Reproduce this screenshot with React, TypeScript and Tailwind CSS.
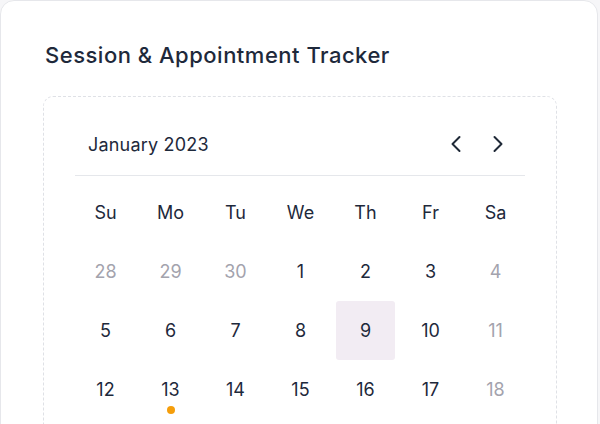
const font = { fontFamily: "Inter, 'Noto Sans', sans-serif" };

type Day = { n: number; muted?: boolean; selected?: boolean; dot?: boolean };

const weekDays = ["Su", "Mo", "Tu", "We", "Th", "Fr", "Sa"];

const rows: Day[][] = [
  [
    { n: 28, muted: true },
    { n: 29, muted: true },
    { n: 30, muted: true },
    { n: 1 },
    { n: 2 },
    { n: 3 },
    { n: 4, muted: true },
  ],
  [
    { n: 5 },
    { n: 6 },
    { n: 7 },
    { n: 8 },
    { n: 9, selected: true },
    { n: 10 },
    { n: 11, muted: true },
  ],
  [
    { n: 12 },
    { n: 13, dot: true },
    { n: 14 },
    { n: 15 },
    { n: 16 },
    { n: 17 },
    { n: 18, muted: true },
  ],
];

function Chevron({ dir }: { dir: "left" | "right" }) {
  return (
    <svg width="14" height="18" viewBox="0 0 14 18" fill="none">
      <path
        d={dir === "left" ? "M10.5 2 L3.5 9 L10.5 16" : "M3.5 2 L10.5 9 L3.5 16"}
        stroke="#1f2937"
        strokeWidth="2"
        strokeLinecap="round"
        strokeLinejoin="round"
      />
    </svg>
  );
}

export default function App() {
  return (
    <div className="w-[600px] h-[424px] bg-[#f6f6f8] overflow-hidden" style={font}>
      <div className="w-[598px] h-[460px] bg-white border border-[#e6e7eb] rounded-[14px] pt-[40px] px-[42px]">
        <h1 className="text-[22px] tracking-[0.5px] font-medium text-[#1e293b] leading-[28px] ml-[2px]">
          Session &amp; Appointment Tracker
        </h1>
        <div className="mt-[27px] w-[514px] border border-dashed border-[#dfe1e6] rounded-[10px] px-[31px] pt-[31px] pb-[40px]">
          <div className="flex items-center justify-between h-[32px] ml-[13px] mr-[20px]">
            <span className="text-[18px] tracking-[0.2px] text-[#1e293b]">January 2023</span>
            <div className="flex items-center gap-[28px]">
              <Chevron dir="left" />
              <Chevron dir="right" />
            </div>
          </div>
          <div className="mt-[15px] border-t border-[#e5e7eb]" />
          <div className="grid grid-cols-[repeat(7,65px)] -ml-[2px] pt-[7px]">
            {weekDays.map((d) => (
              <div key={d} className="h-[59px] flex items-center justify-center text-[18px] text-[#1e293b]">
                {d}
              </div>
            ))}
            {rows.flat().map((d, i) => (
              <div key={i} className="h-[59px] flex items-center justify-center">
                <div
                  className={
                    "relative w-[59px] h-[59px] rounded-[3px] flex items-center justify-center text-[18px] " +
                    (d.selected ? "bg-[#f2ecf3] " : "") +
                    (d.muted ? "text-[#a3a3ad]" : "text-[#1e293b]")
                  }
                >
                  {d.n}
                  {d.dot && (
                    <span className="absolute bottom-[5px] left-1/2 -translate-x-1/2 w-[8px] h-[8px] rounded-full bg-[#f59e0b]" />
                  )}
                </div>
              </div>
            ))}
          </div>
        </div>
      </div>
    </div>
  );
}
